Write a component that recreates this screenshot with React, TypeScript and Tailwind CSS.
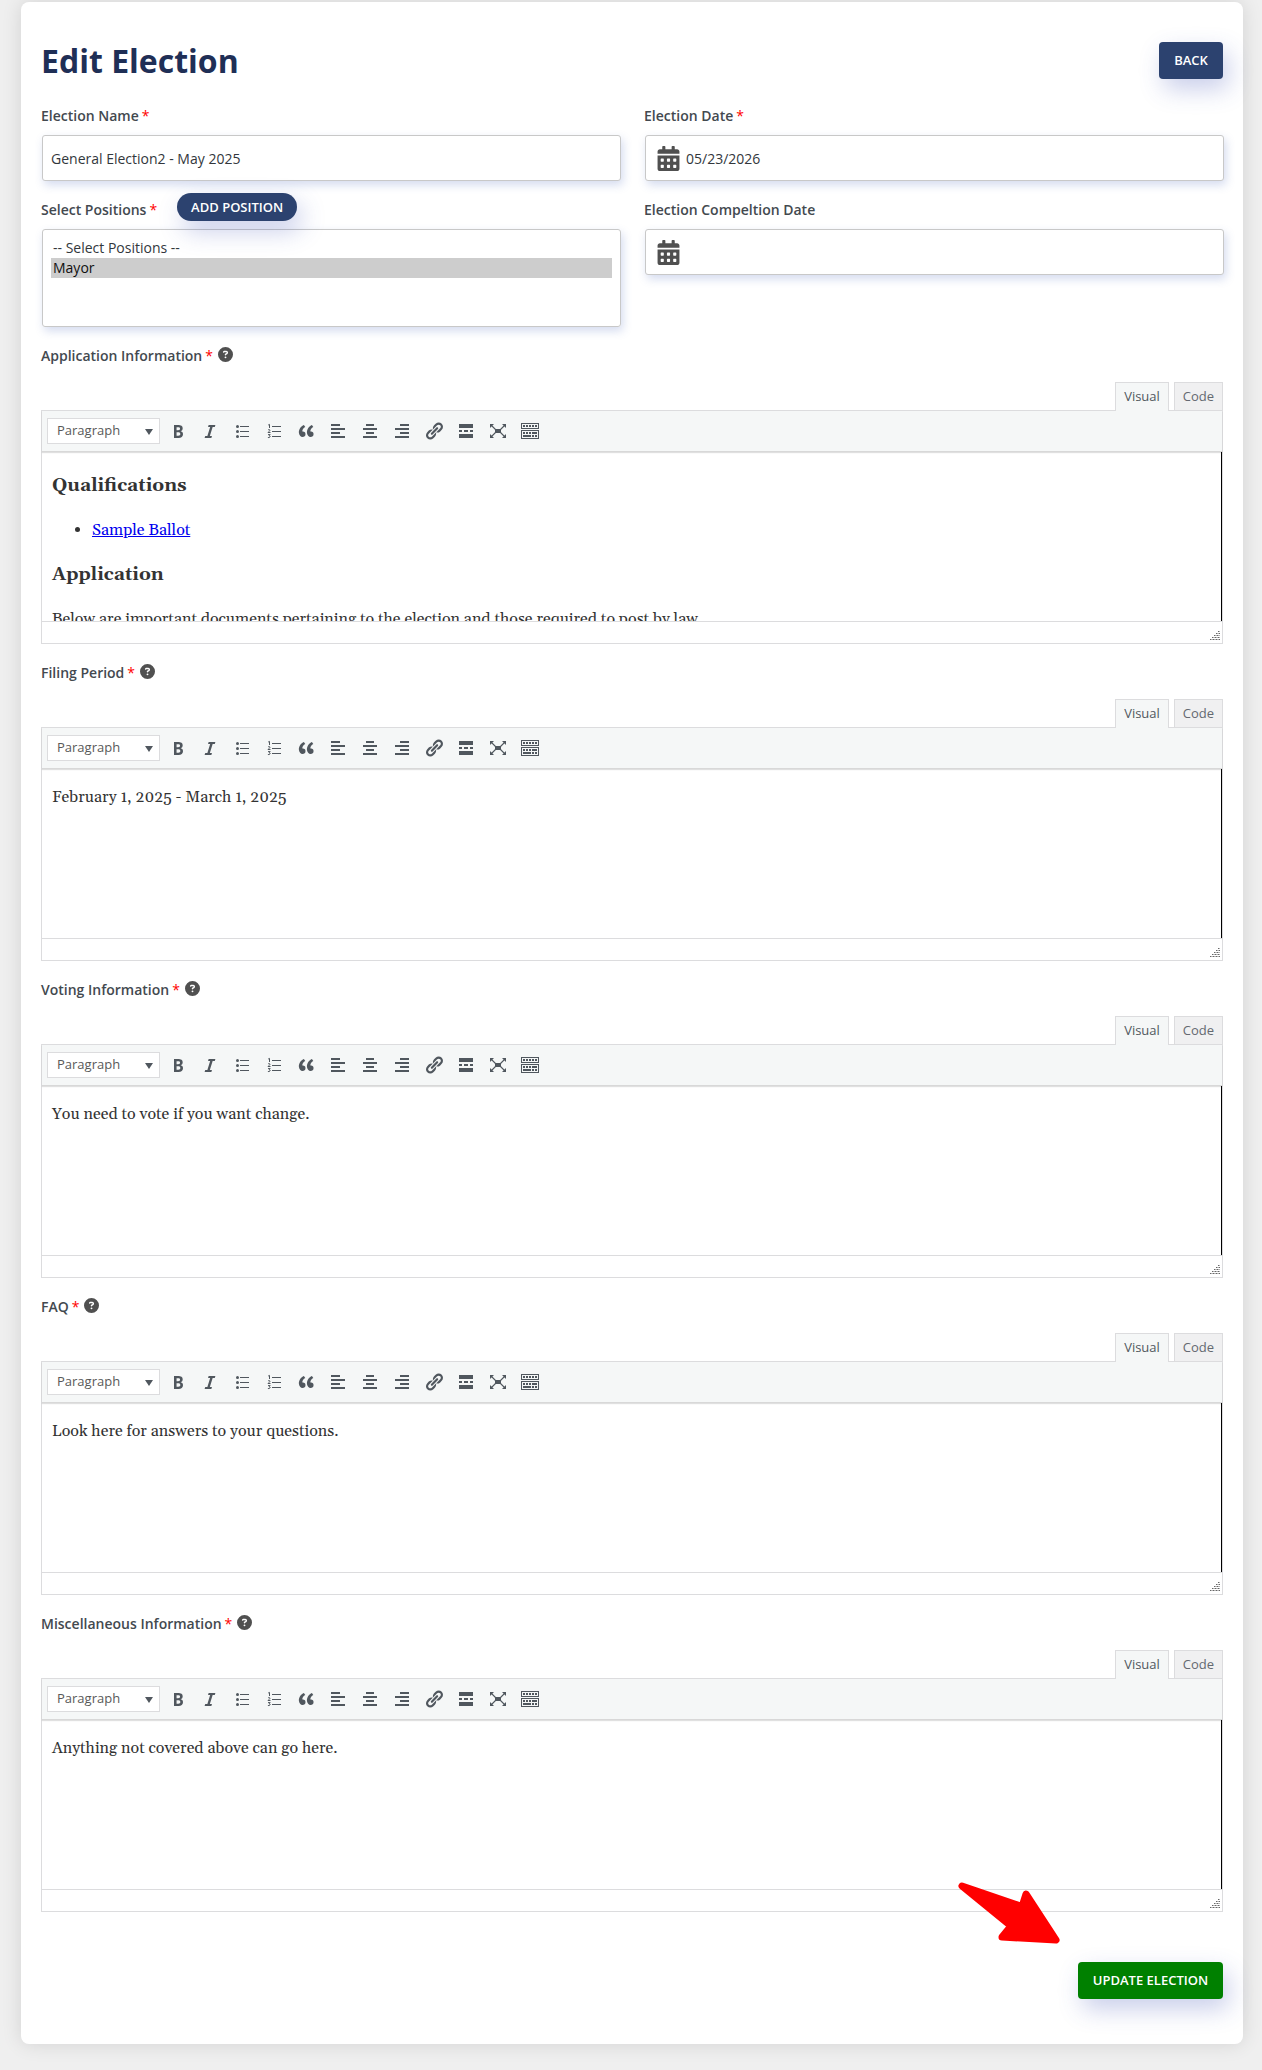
import React from "react";
import { FaCalendarAlt } from "react-icons/fa";
import { FaCircleQuestion } from "react-icons/fa6";

const Sv = ({ children }: { children: React.ReactNode }) => (
  <span className="flex h-5 w-8 shrink-0 items-center justify-center">
    <svg width="20" height="20" viewBox="0 0 20 20" fill="#50575e">{children}</svg>
  </span>
);

const Toolbar = () => (
  <div className="flex h-[41px] items-center border-b border-[#d8d8d8] bg-[#f5f7f7] pl-[5px] shadow-[0_1px_1px_rgba(0,0,0,0.12)]">
    <div className="mr-[2px] flex h-[26px] w-[113px] items-center justify-between border border-[#dcdcde] bg-white pr-[6px] pl-[9px] text-[13px] text-[#595959]">
      <span>Paragraph</span>
      <span className="mt-[2px] h-0 w-0 border-x-4 border-t-[6px] border-x-transparent border-t-[#50575e]" />
    </div>
    <Sv><path d="M6 4v13h4.54c1.37 0 2.46-.33 3.26-1 .8-.66 1.2-1.58 1.2-2.77 0-.84-.17-1.51-.51-2.01s-.9-.85-1.67-1.03v-.09c.57-.1 1.02-.4 1.36-.9s.51-1.13.51-1.91c0-1.14-.39-1.98-1.17-2.5C12.75 4.26 11.5 4 9.78 4H6zm2.57 5.15V6.26h1.36c.73 0 1.27.11 1.61.32.34.22.51.58.51 1.07 0 .54-.16.92-.47 1.15s-.82.35-1.51.35h-1.5zm0 2.19h1.6c1.44 0 2.16.53 2.16 1.61 0 .6-.17 1.05-.51 1.34s-.86.43-1.57.43H8.57v-3.38z" /></Sv>
    <Sv><path d="M14.78 6h-2.13l-2.8 9h2.12l-.62 2H4.6l.62-2h2.14l2.8-9H8.03l.62-2h6.75z" /></Sv>
    <Sv>
      <circle cx="5.5" cy="5.5" r="1.5" /><circle cx="5.5" cy="10.5" r="1.5" /><circle cx="5.5" cy="15.5" r="1.5" />
      <path d="M8 5h9v1H8zM8 10h9v1H8zM8 15h9v1H8z" />
    </Sv>
    <Sv>
      <path d="M8 5h9v1H8zM8 10h9v1H8zM8 15h9v1H8z" />
      <path fill="none" stroke="#50575e" strokeWidth="1" d="M4.200 4l1.300-.6V7M4 9c.5-.6 2-.6 2 .3 0 .8-1.600 1.300-2 2.200h2.500M4 13.600h2.200l-1.100 1.200c1.600 0 1.500 2.200-1.200 1.700" />
    </Sv>
    <Sv><path d="M9.490 13.220c0-.74-.2-1.380-.61-1.900-.62-.78-1.830-.88-2.530-.72-.29-1.650 1.110-3.750 2.920-4.650L7.880 4c-2.730 1.300-5.420 4.280-4.960 8.050C3.210 14.430 4.590 16 6.540 16c.85 0 1.560-.25 2.120-.75s.83-1.180.83-2.030zm8.050 0c0-.74-.2-1.380-.61-1.900-.63-.78-1.830-.88-2.530-.72-.29-1.650 1.110-3.750 2.920-4.650L15.930 4c-2.730 1.300-5.410 4.280-4.950 8.050.29 2.380 1.660 3.950 3.610 3.950.85 0 1.560-.25 2.120-.75s.83-1.180.83-2.030z" /></Sv>
    <Sv><path d="M12 5V3H3v2h9zm5 4V7H3v2h14zm-5 4v-2H3v2h9zm5 4v-2H3v2h14z" /></Sv>
    <Sv><path d="M14 5V3H6v2h8zm3 4V7H3v2h14zm-3 4v-2H6v2h8zm3 4v-2H3v2h14z" /></Sv>
    <Sv><path d="M17 5V3H8v2h9zm0 4V7H3v2h14zm0 4v-2H8v2h9zm0 4v-2H3v2h14z" /></Sv>
    <Sv><path d="M17.740 2.760c1.680 1.690 1.680 4.410 0 6.100l-1.530 1.520c-1.120 1.120-2.700 1.470-4.140 1.090l2.620-2.610.76-.77.76-.76c.84-.84.84-2.200 0-3.040-.84-.85-2.200-.85-3.040 0l-.77.76-3.380 3.380c-.37-1.440-.02-3.020 1.100-4.140l1.520-1.530c1.690-1.680 4.420-1.680 6.100 0zM8.590 13.430l5.340-5.340c.42-.42.42-1.100 0-1.520-.44-.43-1.130-.39-1.530 0l-5.330 5.340c-.42.42-.42 1.100 0 1.520.44.43 1.130.39 1.520 0zm-.76 2.290l4.140-4.150c.38 1.440.03 3.020-1.090 4.140l-1.520 1.530c-1.690 1.680-4.410 1.680-6.100 0-1.680-1.680-1.680-4.420 0-6.100l1.530-1.520c1.120-1.120 2.700-1.470 4.140-1.100l-4.140 4.150c-.85.84-.85 2.200 0 3.050.84.84 2.200.84 3.040 0z" /></Sv>
    <Sv><path d="M17 7V3H3v4h14zM6 11V9H3v2h3zm6 0V9H8v2h4zm5 0V9h-3v2h3zm0 6v-4H3v4h14z" /></Sv>
    <Sv>
      <path d="M7 8h6v4H7zM2 3h4L2 7zM18 3v4l-4-4zM2 17v-4l4 4zM18 17h-4l4-4z" />
      <path d="M3 4l5 5M17 4l-5 5M3 16l5-5M17 16l-5-5" stroke="#50575e" strokeWidth="1.100" />
    </Sv>
    <Sv>
      <path fillRule="evenodd" d="M1 2h18v6H1zM2 3v4h16V3zM1 9h18v9H1zM2 10v7h16v-7z" />
      <path d="M3 4h2v2H3zM6 4h2v2H6zM9 4h2v2H9zM12 4h2v2h-2zM15 4h2v2h-2zM3 11h2v2H3zM6 11h2v2H6zM9 11h2v2H9zM12 11h5v2h-5zM3 14h8v2H3zM12 14h2v2h-2zM15 14h2v2h-2z" />
    </Sv>
  </div>
);

const Label = ({ text, req = true, help = false }: { text: string; req?: boolean; help?: boolean }) => (
  <div className="flex h-5 items-center text-[14px] font-semibold text-[#43494f]">
    {text}
    {req && <span className="ml-[3px] font-normal text-[#ff0000]">*</span>}
    {help && <FaCircleQuestion className="-mt-[2px] ml-[5px] h-[15px] w-[15px] text-[#505050]" />}
  </div>
);

const Editor = ({ label, children }: { label: string; children: React.ReactNode }) => (
  <section className="h-[317px]">
    <Label text={label} help />
    <div className="mt-[17px] flex h-[29px] justify-end text-[13px]">
      <div className="z-10 mr-[5px] flex w-[54px] items-center justify-center border border-b-0 border-[#dcdcde] bg-[#f5f7f7] text-[#50575e]">Visual</div>
      <div className="mb-px flex w-[49px] items-center justify-center border border-b-0 border-[#dcdcde] bg-[#f0f0f1] text-[#646970]">Code</div>
    </div>
    <div className="-mt-px flex h-[234px] flex-col border border-[#dcdcde]">
      <Toolbar />
      <div className="h-[169px] overflow-hidden border-r border-black px-[10px] font-[Gelasio,Georgia,'Liberation_Serif',serif] text-[16px] leading-6 text-[#333]">{children}</div>
      <div className="flex flex-1 items-end justify-end border-t border-[#dcdcde] p-[2px]">
        <svg width="10" height="10" viewBox="0 0 10 10" stroke="#666" strokeDasharray="1 .5"><path d="M8 .5h2M6 2.500h4M4 4.500h6M2 6.500h8M0 8.500h10" /></svg>
      </div>
    </div>
  </section>
);

const field = "flex h-[46px] w-[579px] items-center rounded-[3px] border border-[#c8c8c8] bg-white shadow-[2px_4px_10px_rgba(60,90,180,0.22)]";

export default function App() {
  return (
    <div className="h-[2070px] bg-[#efefef] pt-[2px] pl-[21px] font-['Open_Sans',sans-serif]">
      <main className="relative h-[2042px] w-[1222px] rounded-lg bg-white pr-5 pl-5 shadow-[0_0_20px_rgba(0,0,0,0.12)]">
        <header className="flex h-[103px] items-start justify-between pt-10">
          <h1 className="text-[32px] leading-[38px] font-bold text-[#1f2f56]">Edit Election</h1>
          <button className="h-[37px] w-16 rounded bg-[#2c426f] text-[13px] font-semibold text-white shadow-[5px_10px_25px_rgba(60,80,180,0.28)]">BACK</button>
        </header>
        <div className="flex justify-between">
          <div>
            <Label text="Election Name" />
            <div className={field + " mt-[10px] ml-px pl-2 text-[14px] text-[#32373c]"}>General Election2 - May 2025</div>
            <div className="mt-[10px] flex h-[38px] items-start">
              <div className="mt-2"><Label text="Select Positions" /></div>
              <button className="relative mt-[2px] ml-5 h-7 w-[120px] rounded-[14px] bg-[#2c426f] pt-px text-[13px] font-semibold text-white shadow-[5px_10px_25px_rgba(60,80,180,0.28)]">ADD POSITION</button>
            </div>
            <div className="ml-px h-[98px] w-[579px] rounded-[3px] border border-[#c8c8c8] px-2 pt-2 text-[14px] leading-5 text-[#32373c] shadow-[2px_4px_10px_rgba(60,90,180,0.22)]">
              <div className="pl-[2px]">-- Select Positions --</div>
              <div className="bg-[#cdcdcd] pl-[2px] text-[#101010]">Mayor</div>
            </div>
          </div>
          <div className="-mr-px w-[580px]">
            <Label text="Election Date" />
            <div className={field + " mt-[10px] ml-px pl-[11px] text-[14px] text-[#32373c]"}>
              <FaCalendarAlt className="mr-[6px] h-[25px] w-[23px] text-[#505050]" />05/23/2026
            </div>
            <div className="mt-[18px]"><Label text="Election Compeltion Date" req={false} /></div>
            <div className={field + " mt-[10px] ml-px pl-[11px]"}><FaCalendarAlt className="h-[25px] w-[23px] text-[#505050]" /></div>
          </div>
        </div>
        <div className="mt-[18px]">
          <Editor label="Application Information">
            <h3 className="mt-[22px] text-[18.720px] font-bold">Qualifications</h3>
            <ul className="mt-5 list-disc pl-10"><li><a className="text-[#0000ee] underline">Sample Ballot</a></li></ul>
            <h3 className="mt-[21px] text-[18.720px] font-bold">Application</h3>
            <p className="mt-5">Below are important documents pertaining to the election and those required to post by law.</p>
          </Editor>
          <Editor label="Filing Period"><p className="mt-4">February 1, 2025 - March 1, 2025</p></Editor>
          <Editor label="Voting Information"><p className="mt-4">You need to vote if you want change.</p></Editor>
          <Editor label="FAQ"><p className="mt-4">Look here for answers to your questions.</p></Editor>
          <Editor label="Miscellaneous Information"><p className="mt-4">Anything not covered above can go here.</p></Editor>
        </div>
        <button className="mt-8 ml-auto block h-[37px] w-[145px] rounded bg-[#008000] text-[13px] font-semibold text-white shadow-[5px_10px_25px_rgba(60,80,180,0.28)]">UPDATE ELECTION</button>
        <svg className="absolute top-[1878px] left-[934px]" width="110" height="70" viewBox="955 1880 110 70" fill="#f00" stroke="#f00" strokeWidth="7" strokeLinejoin="round"><path d="M962 1886L1022 1906.500L1026 1894L1056 1940L1002 1937L1011 1926Z" /></svg>
      </main>
    </div>
  );
}
